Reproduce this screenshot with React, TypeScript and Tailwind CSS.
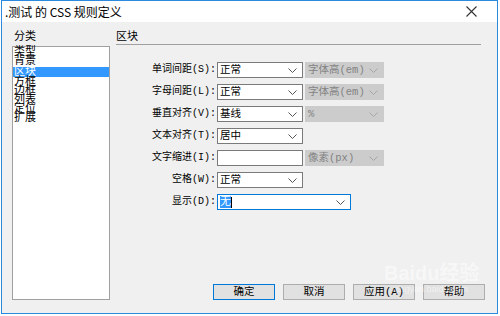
const CJK = "font-['Liberation_Mono','Noto_Sans_CJK_SC',monospace]";

const Chevron = ({ color }: { color: string }) => (
  <svg width="9" height="5" viewBox="0 0 9 5" className="shrink-0">
    <path d="M0.5 0.5 L4.5 4.5 L8.5 0.5" fill="none" stroke={color} strokeWidth="1" />
  </svg>
);

type SelectProps = {
  value: string;
  width: string;
  disabled?: boolean;
  focus?: boolean;
  noArrow?: boolean;
};

const Select = ({ value, width, disabled, focus, noArrow }: SelectProps) => {
  let box = "border-[#7a7a7a] bg-white text-black";
  if (disabled) box = "border-[#cccccc] bg-[#cccccc] text-[#838383]";
  if (focus) box = "border-[#0078d7] bg-white text-black";
  return (
    <div className={`flex h-[16px] items-center justify-between border pl-[2px] pr-[5px] ${width} ${box}`}>
      {focus ? (
        <span className="flex items-center">
          <span className="bg-[#3399ff] leading-[12px] text-white">{value}</span>
          <span className="h-[11px] w-px bg-black" />
        </span>
      ) : (
        <span className="text-[10.5px] leading-[14px]">{value}</span>
      )}
      {!noArrow && <Chevron color={disabled ? "#a6a6a6" : "#555555"} />}
    </div>
  );
};

const Row = ({ label, children }: { label: string; children: React.ReactNode }) => (
  <div className="flex h-[16px] items-center">
    <span className="w-[101px] pr-[1px] text-right text-[10px] leading-[14px]">{label}</span>
    <div className="flex gap-[2px]">{children}</div>
  </div>
);

const categories = ["类型", "背景", "区块", "方框", "边框", "列表", "定位", "扩展"];

export default function App() {
  return (
    <div className={`relative h-[316px] w-[500px] bg-white text-[11px] text-black ${CJK}`}>
      <div className="ml-px flex h-[314px] w-[497px] flex-col border border-[#2b8ae0] bg-[#f0f0f0]">
        {/* title bar */}
        <div className="flex h-[21px] items-center justify-between bg-white pl-[3px] pr-[20px]">
          <span className="font-['Noto_Sans_CJK_SC',sans-serif] text-[12px] leading-[16px]">
            .测试 的 CSS 规则定义
          </span>
          <svg width="11" height="11" viewBox="0 0 11 11">
            <path d="M0.5 0.5 L10.5 10.5 M10.5 0.5 L0.5 10.5" stroke="#333" strokeWidth="1.1" />
          </svg>
        </div>

        <div className="flex items-start pl-[10px] pt-[8px]">
          {/* categories */}
          <div className="flex w-[98px] flex-col">
            <span className="pl-[2px] leading-[14px]">分类</span>
            <div className="mt-[2px] h-[254px] border border-[#a0a0a0] bg-white pt-[1px]">
              {categories.map((c, i) => (
                <div
                  key={c}
                  className={
                    i === 2
                      ? "mt-[1px] mb-[1px] h-[10px] bg-[#3399ff] pl-[1px] leading-[10px] text-white"
                      : "h-[9px] pl-[1px] leading-[9px]"
                  }
                >
                  {c}
                </div>
              ))}
            </div>
          </div>

          {/* block panel */}
          <div className="ml-[6px] flex h-[270px] w-[372px] flex-col">
            <span className="leading-[14px]">区块</span>
            <div className="h-px w-[365px] bg-[#a0a0a0]" />
            <div className="mt-[17px] flex flex-col gap-[6px]">
              <Row label="单词间距(S):">
                <Select value="正常" width="w-[86px]" />
                <Select value="字体高(em)" width="w-[79px]" disabled />
              </Row>
              <Row label="字母间距(L):">
                <Select value="正常" width="w-[86px]" />
                <Select value="字体高(em)" width="w-[79px]" disabled />
              </Row>
              <Row label="垂直对齐(V):">
                <Select value="基线" width="w-[86px]" />
                <Select value="%" width="w-[79px]" disabled />
              </Row>
              <Row label="文本对齐(T):">
                <Select value="居中" width="w-[86px]" />
              </Row>
              <Row label="文字缩进(I):">
                <Select value="" width="w-[86px]" noArrow />
                <Select value="像素(px)" width="w-[79px]" disabled />
              </Row>
              <Row label="空格(W):">
                <Select value="正常" width="w-[86px]" />
              </Row>
              <Row label="显示(D):">
                <Select value="无" width="w-[134px]" focus />
              </Row>
            </div>

            <div className="ml-[97px] mt-auto flex gap-[8px]">
              {["确定", "取消", "应用(A)", "帮助"].map((b, i) => (
                <div
                  key={b}
                  className={`flex h-[16px] w-[62px] items-center justify-center border bg-[#e1e1e1] text-[10.5px] leading-[14px] ${
                    i === 0 ? "border-[#0078d7]" : "border-[#adadad]"
                  }`}
                >
                  {b}
                </div>
              ))}
            </div>
          </div>
        </div>
      </div>

      {/* watermark */}
      <div className="pointer-events-none absolute left-[384px] top-[262px] flex flex-col items-center text-white/50">
        <span className="font-['Liberation_Sans','Noto_Sans_CJK_SC',sans-serif] text-[20px] font-bold leading-[22px]">
          Baidu经验
        </span>
        <span className="font-['Liberation_Sans',sans-serif] text-[9px] leading-[10px]">jingyan.baidu.com</span>
      </div>
    </div>
  );
}
